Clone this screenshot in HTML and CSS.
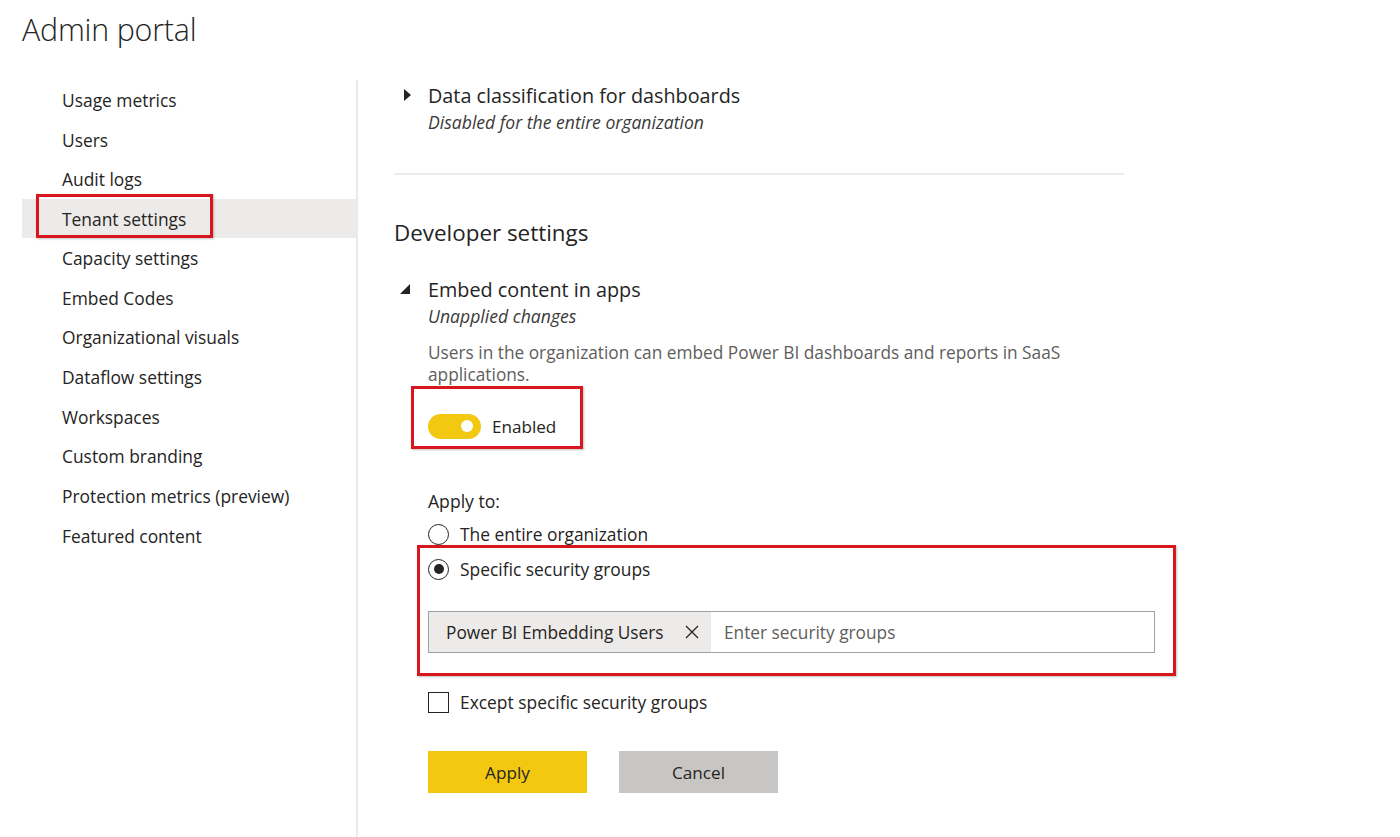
FILE: index.html
```html
<!DOCTYPE html>
<html lang="en">
<head>
<meta charset="utf-8">
<title>Admin portal</title>
<link rel="stylesheet" href="styles.css">
</head>
<body>
<header class="page-head">
  <h1 class="page-title">Admin portal</h1>
</header>
<div class="layout">
  <nav class="sidebar">
    <ul class="nav-list">
      <li class="nav-item">Usage metrics</li>
      <li class="nav-item">Users</li>
      <li class="nav-item">Audit logs</li>
      <li class="nav-item nav-item--active"><span class="nav-label">Tenant settings</span><span class="highlight highlight--nav"></span></li>
      <li class="nav-item">Capacity settings</li>
      <li class="nav-item">Embed Codes</li>
      <li class="nav-item">Organizational visuals</li>
      <li class="nav-item">Dataflow settings</li>
      <li class="nav-item">Workspaces</li>
      <li class="nav-item">Custom branding</li>
      <li class="nav-item">Protection metrics (preview)</li>
      <li class="nav-item">Featured content</li>
    </ul>
  </nav>
  <main class="content">
    <section class="setting setting--collapsed">
      <div class="setting-head">
        <span class="caret caret--right"></span>
        <div class="setting-titles">
          <div class="setting-title">Data classification for dashboards</div>
          <div class="setting-sub">Disabled for the entire organization</div>
        </div>
      </div>
    </section>
    <hr class="rule">
    <h2 class="group-title">Developer settings</h2>
    <section class="setting setting--open">
      <div class="setting-head">
        <span class="caret caret--down"></span>
        <div class="setting-titles">
          <div class="setting-title">Embed content in apps</div>
          <div class="setting-sub">Unapplied changes</div>
        </div>
      </div>
      <div class="setting-body">
        <p class="setting-desc">Users in the organization can embed Power BI dashboards and reports in SaaS applications.</p>
        <div class="toggle-row">
          <span class="highlight highlight--toggle"></span>
          <span class="toggle"><span class="toggle-knob"></span></span>
          <span class="toggle-label">Enabled</span>
        </div>
        <div class="apply-label">Apply to:</div>
        <label class="radio-row">
          <span class="radio"></span>
          <span class="radio-text">The entire organization</span>
        </label>
        <div class="groups-block">
          <span class="highlight highlight--groups"></span>
          <label class="radio-row">
            <span class="radio radio--checked"><span class="radio-dot"></span></span>
            <span class="radio-text">Specific security groups</span>
          </label>
          <div class="picker">
            <span class="chip">
              <span class="chip-text">Power BI Embedding Users</span>
              <svg class="chip-x" width="14" height="14" viewBox="0 0 14 14" aria-hidden="true"><path d="M1 1 L13 13 M13 1 L1 13" stroke="#252423" stroke-width="1.3" fill="none"/></svg>
            </span>
            <span class="picker-placeholder">Enter security groups</span>
          </div>
        </div>
        <label class="check-row">
          <span class="checkbox"></span>
          <span class="radio-text">Except specific security groups</span>
        </label>
        <div class="actions">
          <button class="btn btn--primary">Apply</button>
          <button class="btn btn--secondary">Cancel</button>
        </div>
      </div>
    </section>
  </main>
</div>
</body>
</html>
```
FILE: styles.css
```css
* { box-sizing: border-box; }
html, body { margin: 0; padding: 0; background: #fff; }
body {
  font-family: "Open Sans", "Noto Sans", "Liberation Sans", sans-serif;
  color: #252423;
  width: 1400px;
  height: 837px;
  overflow: hidden;
}
.page-head { padding: 8px 0 0 22px; height: 80px; }
.page-title {
  margin: 0;
  font-weight: 300;
  font-size: 30.4px;
  line-height: 44px;
  color: #252423;
  letter-spacing: -0.2px;
}
.layout { display: flex; align-items: stretch; height: 757px; }
.sidebar {
  margin-left: 22px;
  width: 336px;
  border-right: 2px solid #edebe9;
}
.nav-list { list-style: none; margin: 0; padding: 0; }
.nav-item {
  position: relative;
  height: 39.7px;
  display: flex;
  align-items: center;
  padding-left: 40px;
  font-size: 17.4px;
  color: #252423;
}
.nav-item--active { background: #edebe9; height: 39px; }
.highlight {
  position: absolute;
  border: 3px solid #d7161e;
  box-shadow: 1px 1px 2px rgba(0,0,0,0.25);
  pointer-events: none;
}
.highlight--nav { left: 14px; top: -5px; width: 177px; height: 44px; }
.content { padding: 0 0 0 36px; flex: 1; }
.setting-head { display: flex; align-items: flex-start; }
.caret { width: 34px; flex: none; position: relative; height: 28px; }
.caret--right::before {
  content: "";
  position: absolute;
  left: 10px; top: 7px;
  border-left: 7px solid #252423;
  border-top: 6.5px solid transparent;
  border-bottom: 6.5px solid transparent;
}
.caret--down::before {
  content: "";
  position: absolute;
  left: 6px; top: 8px;
  border-right: 10px solid #252423;
  border-top: 10px solid transparent;
}
.setting--collapsed { padding-top: 2px; }
.setting-title { font-size: 19.8px; line-height: 28px; color: #252423; }
.setting-sub { font-size: 17.6px; font-style: italic; line-height: 24px; color: #3b3a39; }
.rule { border: 0; height: 2px; background: #edebe9; margin: 39px 0 0 0; width: 730px; }
.group-title { margin: 42px 0 0 0; font-weight: 400; font-size: 22.4px; line-height: 32px; color: #252423; }
.setting--open { margin-top: 27px; }
.setting-body { padding-left: 34px; }
.setting-desc { margin: 14px 0 0 0; width: 700px; font-size: 17.3px; line-height: 22px; color: #605e5c; }
.toggle-row { position: relative; display: flex; align-items: center; margin-top: 27px; height: 26px; }
.highlight--toggle { left: -17px; top: -27px; width: 172px; height: 63px; }
.toggle {
  width: 53px; height: 25px; border-radius: 13px; background: #f2c811;
  position: relative; flex: none;
}
.toggle-knob {
  position: absolute; right: 8px; top: 6.5px; width: 12px; height: 12px;
  border-radius: 50%; background: #fff;
}
.toggle-label { margin-left: 11px; font-size: 17.1px; }
.apply-label { margin-top: 50px; font-size: 17.6px; line-height: 24px; }
.radio-row, .check-row { display: flex; align-items: center; height: 24px; font-size: 17.4px; }
.radio-row { margin-top: 9px; }
.radio {
  width: 21px; height: 21px; border: 1px solid #252423; border-radius: 50%;
  flex: none; display: flex; align-items: center; justify-content: center;
}
.radio-dot { width: 10px; height: 10px; border-radius: 50%; background: #252423; }
.radio-text { margin-left: 11px; }
.groups-block { position: relative; padding-top: 1px; }
.highlight--groups { left: -11px; top: -1px; width: 759px; height: 131px; }
.groups-block .radio-row { margin-top: 10px; }
.picker {
  margin-top: 30px;
  width: 727px; height: 42px;
  border: 1px solid #a19f9d;
  display: flex; align-items: stretch;
}
.chip {
  display: flex; align-items: center; background: #edebe9;
  padding: 0 12px 0 17px; width: 282px;
}
.chip-text { font-size: 17.3px; flex: 1; white-space: nowrap; }
.chip-x { flex: none; }
.picker-placeholder { display: flex; align-items: center; margin-left: 13px; font-size: 17.3px; color: #605e5c; }
.check-row { margin-top: 37px; }
.checkbox { width: 21px; height: 21px; border: 1px solid #252423; flex: none; }
.actions { display: flex; gap: 32px; margin-top: 37px; }
.btn {
  width: 159px; height: 42px; border: 0; font-family: inherit; font-size: 17.2px;
  color: #252423; padding: 0;
}
.btn--primary { background: #f2c811; }
.btn--secondary { background: #c8c6c4; }
```
